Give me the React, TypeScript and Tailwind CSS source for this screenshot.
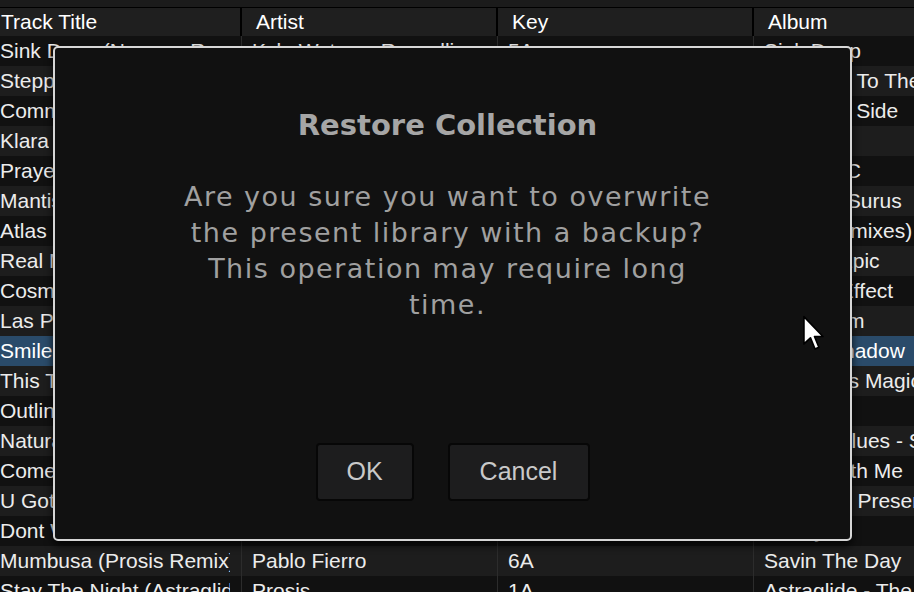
import React from "react";

type Track = { title: string; artist: string; key: string; album: string };

const TRACKS: Track[] = [
  { title: "Sink Deep (Navarro Remix)", artist: "Kyle Watson, Russellio", key: "5A", album: "Sink Deep" },
  { title: "Steppin Out", artist: "Dosem", key: "8A", album: "Welcome To The Jungle" },
  { title: "Common Ground", artist: "Roland Clark", key: "4A", album: "The Dark Side" },
  { title: "Klara", artist: "Mind Against", key: "9A", album: "" },
  { title: "Prayer", artist: "Kollektiv Turmstrasse", key: "11A", album: "Episode C" },
  { title: "Mantis", artist: "Stephan Bodzin", key: "2A", album: "Tales Of Surus" },
  { title: "Atlas (Original Mix)", artist: "Worakls", key: "7A", album: "Atlas (Remixes)" },
  { title: "Real Magic", artist: "Hot Since 82", key: "10A", album: "Alive In Epic" },
  { title: "Cosmic Dust", artist: "Tale Of Us", key: "3A", album: "Cosmic Effect" },
  { title: "Las Palmas", artist: "Adriatique", key: "6A", album: "The Album" },
  { title: "Smile", artist: "Recondite", key: "12A", album: "In The Shadow" },
  { title: "This Time", artist: "Maceo Plex", key: "1A", album: "Maybe It's Magic" },
  { title: "Outline", artist: "Dixon", key: "5A", album: "" },
  { title: "Natural Blues", artist: "Moby", key: "8A", album: "Natural Blues - Single" },
  { title: "Come With Me", artist: "Solomun", key: "4A", album: "Come With Me" },
  { title: "U Got Me", artist: "Kerri Chandler", key: "9A", album: "Ibiza Sun Presents" },
  { title: "Dont Wait", artist: "Ame", key: "2A", album: "Poetry" },
  { title: "Mumbusa (Prosis Remix)", artist: "Pablo Fierro", key: "6A", album: "Savin The Day" },
  { title: "Stay The Night (Astraglide Remix)", artist: "Prosis", key: "1A", album: "Astraglide - The Night" },
];

const SELECTED = 10;

function Cursor() {
  return (
    <svg className="absolute left-[802px] top-[315px]" width="24" height="37" viewBox="0 0 14 22">
      <path
        d="M1 1 L1 17.2 L4.9 13.6 L7.6 20.2 L9.9 19.2 L7.3 12.8 L12.3 12.8 Z"
        fill="#ffffff"
        stroke="#000000"
        strokeWidth="1"
        strokeLinejoin="round"
      />
    </svg>
  );
}

export default function App() {
  return (
    <div className="relative w-[914px] h-[592px] overflow-hidden bg-[#111111] font-['Liberation_Sans',Arial,sans-serif] text-[21px] text-[#ececec]">
      <div className="h-[7px] bg-[#1b1b1b]" />
      <div className="h-[1px] bg-black" />

      {/* header */}
      <div className="flex h-[28px] items-center bg-[#1f1f1f] text-white">
        <div className="w-[242px] h-full flex items-center pl-[1px] border-r-2 border-black">Track Title</div>
        <div className="w-[256px] h-full flex items-center pl-[14px] border-r-2 border-black">Artist</div>
        <div className="w-[256px] h-full flex items-center pl-[14px] border-r-2 border-black">Key</div>
        <div className="flex-1 h-full flex items-center pl-[14px]">Album</div>
      </div>

      {/* rows */}
      {TRACKS.map((t, i) => (
        <div
          key={i}
          className={
            i === SELECTED
              ? "flex h-[30px] items-center bg-[#2a4b6a] text-white"
              : i % 2 === 0
              ? "flex h-[30px] items-center bg-[#111111]"
              : "flex h-[30px] items-center bg-[#1d1d1d]"
          }
        >
          <div className="w-[242px] h-full flex items-center pr-[11px] overflow-hidden whitespace-nowrap border-r border-[#2c2c2c]">
            <span className="block overflow-hidden">{t.title}</span>
          </div>
          <div className="w-[256px] h-full flex items-center pl-[10px] pr-[9px] overflow-hidden whitespace-nowrap border-r border-[#2c2c2c]">
            <span className="block overflow-hidden">{t.artist}</span>
          </div>
          <div className="w-[256px] h-full flex items-center pl-[10px] overflow-hidden whitespace-nowrap border-r border-[#2c2c2c]">{t.key}</div>
          <div className="flex-1 h-full flex items-center pl-[10px] overflow-hidden whitespace-nowrap">{t.album}</div>
        </div>
      ))}

      {/* dialog */}
      <div className="absolute left-[53px] top-[46px] w-[799px] h-[495px] rounded-[5px] border-2 border-[#d6d6d6] bg-[#111111] shadow-[0_4px_8px_rgba(0,0,0,0.8)] flex flex-col items-center">
        <div className="mt-[59px] mr-[10px] h-[36px] leading-[36px] font-['DejaVu_Sans',Verdana,sans-serif] font-bold text-[29px] text-[#a6a6a6]">
          Restore Collection
        </div>
        <p className="mt-[36px] mr-[10px] text-center font-['DejaVu_Sans',Verdana,sans-serif] text-[27px] tracking-[1.5px] leading-[36px] text-[#a0a0a0]">
          Are you sure you want to overwrite
          <br />
          the present library with a backup?
          <br />
          This operation may require long
          <br />
          time.
        </p>
        <div className="mt-auto mb-[38px] flex gap-[34px]">
          <button className="w-[98px] h-[58px] rounded-[4px] border-2 border-[#070707] bg-[#1d1d1e] text-[25px] text-[#c9c9c9]">
            OK
          </button>
          <button className="w-[142px] h-[58px] rounded-[4px] border-2 border-[#070707] bg-[#1d1d1e] text-[25px] text-[#c9c9c9]">
            Cancel
          </button>
        </div>
      </div>

      <Cursor />
    </div>
  );
}
